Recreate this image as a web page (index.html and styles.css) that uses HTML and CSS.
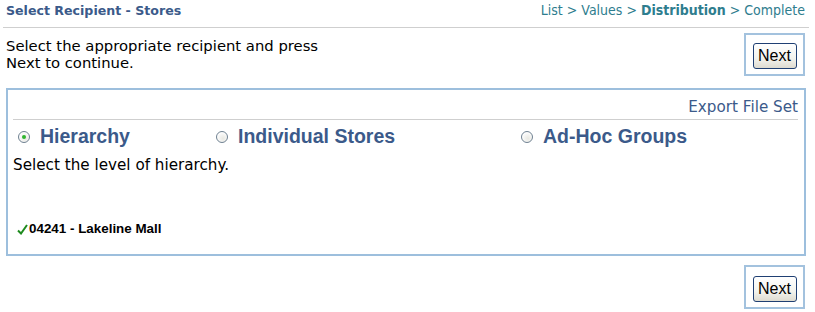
FILE: index.html
```html
<!DOCTYPE html>
<html>
<head>
<meta charset="utf-8">
<link rel="stylesheet" href="styles.css">
</head>
<body>
<div class="page">
  <div class="header">
    <div class="title">Select Recipient - Stores</div>
    <div class="crumbs">List &gt; Values &gt; <b>Distribution</b> &gt; Complete</div>
  </div>
  <div class="intro">
    <div class="intro-text">Select the appropriate recipient and press<br>Next to continue.</div>
    <div class="next-box"><button class="next-btn">Next</button></div>
  </div>
  <div class="panel">
    <div class="export-row"><span class="export">Export File Set</span></div>
    <div class="radio-row">
      <label class="opt opt-1"><span class="radio checked"></span><span class="opt-label">Hierarchy</span></label>
      <label class="opt opt-2"><span class="radio"></span><span class="opt-label">Individual Stores</span></label>
      <label class="opt opt-3"><span class="radio"></span><span class="opt-label">Ad-Hoc Groups</span></label>
    </div>
    <div class="help">Select the level of hierarchy.</div>
    <div class="store">
      <svg class="check" width="11" height="11" viewBox="0 0 11 11"><path d="M1 6.5 L4 9.5 L10 1" fill="none" stroke="#1e8a1e" stroke-width="2"/></svg>
      <span>04241 - Lakeline Mall</span>
    </div>
  </div>
  <div class="bottom">
    <div class="next-box"><button class="next-btn">Next</button></div>
  </div>
</div>
</body>
</html>
```

FILE: styles.css
```css
* { box-sizing: border-box; }
body {
  margin: 0;
  background: #fff;
  font-family: "DejaVu Sans", Verdana, sans-serif;
  color: #000;
}
.page {
  margin-left: 3px;
  width: 806px;
}
.header {
  display: flex;
  justify-content: space-between;
  align-items: flex-start;
  height: 28px;
  border-bottom: 1px solid #cfcfcf;
  padding: 2px 4px 0 3px;
}
.title {
  font-weight: bold;
  font-size: 12.6px;
  color: #3b5a8a;
  padding-top: 1px;
}
.crumbs {
  font-family: "DejaVu Sans Condensed", "DejaVu Sans", sans-serif;
  font-size: 14px;
  color: #2e7d8e;
}
.crumbs b { font-weight: bold; }
.intro {
  display: flex;
  justify-content: space-between;
  align-items: flex-start;
  padding: 0 4px 0 3px;
}
.intro-text {
  margin-top: 9px;
  font-size: 14.8px;
  line-height: 17px;
}
.next-box {
  width: 61px;
  height: 43px;
  border: 2px solid #a3c2de;
  display: flex;
  align-items: center;
  justify-content: center;
  margin-top: 5px;
  margin-bottom: 12px;
}
.next-btn {
  width: 44px;
  height: 26px;
  margin-top: 3px;
  padding: 0;
  font-family: "Liberation Sans", Arial, sans-serif;
  font-size: 16px;
  color: #000;
  border: 1px solid #1f3f73;
  border-radius: 3px;
  background: linear-gradient(#ffffff, #f3f3ee 60%, #dedbd0);
}
.panel {
  margin-left: 3px;
  width: 800px;
  height: 168px;
  border: 2px solid #9dbfdd;
  padding: 0 6px 0 5px;
}
.export-row {
  height: 30px;
  border-bottom: 1px solid #cfcfcf;
  display: flex;
  justify-content: flex-end;
  align-items: flex-end;
  padding-bottom: 3px;
}
.export {
  font-size: 15.2px;
  color: #3b5a8a;
}
.radio-row {
  display: flex;
  align-items: center;
  height: 33px;
}
.opt {
  display: flex;
  align-items: center;
}
.opt-1 { width: 198px; }
.opt-2 { width: 305px; }
.radio {
  width: 12px;
  height: 12px;
  border-radius: 50%;
  border: 1px solid #6f8191;
  background: radial-gradient(circle at 60% 65%, #e8e8e2, #fdfdfd 70%);
  margin: 0 10px 0 5px;
  position: relative;
}
.radio.checked::after {
  content: "";
  position: absolute;
  left: 3px;
  top: 3px;
  width: 4px;
  height: 4px;
  border-radius: 50%;
  background: #2fb52f;
}
.opt-label {
  font-family: "Liberation Sans", Arial, sans-serif;
  font-weight: bold;
  font-size: 19.5px;
  color: #3b5a8a;
}
.help {
  margin-top: 3px;
  font-size: 15.2px;
}
.store {
  margin-top: 47px;
  display: flex;
  align-items: center;
  padding-left: 4px;
  font-family: "Liberation Sans", Arial, sans-serif;
  font-weight: bold;
  font-size: 13.4px;
}
.check { margin-right: 1px; margin-top: 2px; }
.bottom {
  display: flex;
  justify-content: flex-end;
  padding-right: 4px;
  margin-top: 9px;
}
.bottom .next-box { margin-top: 0; margin-bottom: 0; height: 44px; }
```
